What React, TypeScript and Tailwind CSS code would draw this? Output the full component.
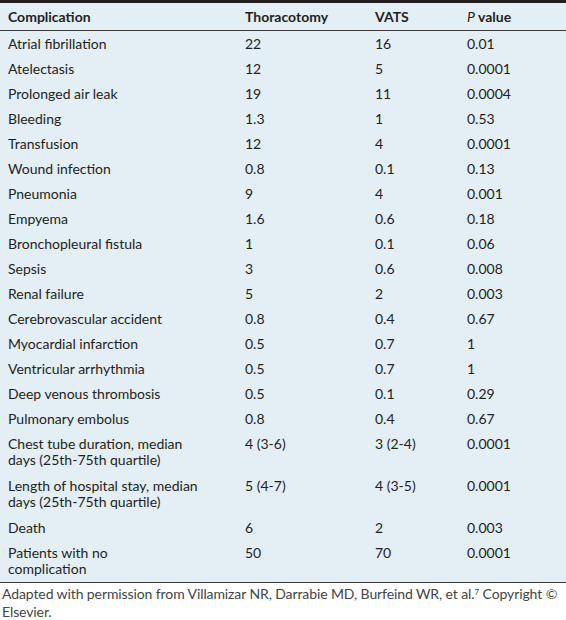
const rows: { name: string[]; t: string; v: string; p: string }[] = [
  { name: ["Atrial fibrillation"], t: "22", v: "16", p: "0.01" },
  { name: ["Atelectasis"], t: "12", v: "5", p: "0.0001" },
  { name: ["Prolonged air leak"], t: "19", v: "11", p: "0.0004" },
  { name: ["Bleeding"], t: "1.3", v: "1", p: "0.53" },
  { name: ["Transfusion"], t: "12", v: "4", p: "0.0001" },
  { name: ["Wound infection"], t: "0.8", v: "0.1", p: "0.13" },
  { name: ["Pneumonia"], t: "9", v: "4", p: "0.001" },
  { name: ["Empyema"], t: "1.6", v: "0.6", p: "0.18" },
  { name: ["Bronchopleural fistula"], t: "1", v: "0.1", p: "0.06" },
  { name: ["Sepsis"], t: "3", v: "0.6", p: "0.008" },
  { name: ["Renal failure"], t: "5", v: "2", p: "0.003" },
  { name: ["Cerebrovascular accident"], t: "0.8", v: "0.4", p: "0.67" },
  { name: ["Myocardial infarction"], t: "0.5", v: "0.7", p: "1" },
  { name: ["Ventricular arrhythmia"], t: "0.5", v: "0.7", p: "1" },
  { name: ["Deep venous thrombosis"], t: "0.5", v: "0.1", p: "0.29" },
  { name: ["Pulmonary embolus"], t: "0.8", v: "0.4", p: "0.67" },
  { name: ["Chest tube duration, median", "days (25th-75th quartile)"], t: "4 (3-6)", v: "3 (2-4)", p: "0.0001" },
  { name: ["Length of hospital stay, median", "days (25th-75th quartile)"], t: "5 (4-7)", v: "4 (3-5)", p: "0.0001" },
  { name: ["Death"], t: "6", v: "2", p: "0.003" },
  { name: ["Patients with no", "complication"], t: "50", v: "70", p: "0.0001" },
];

export default function App() {
  return (
    <div className="w-[566px] h-[620px] bg-white text-[#231f20] font-['Lato','Open_Sans',sans-serif] text-[14px]">
      <div className="bg-[#e3eef5] border-t-[3px] border-[#231f20] border-b border-b-[#3a3a3a]">
        {/* header */}
        <div className="grid grid-cols-[237px_130px_92px_1fr] h-[28px] items-center pl-[8px] border-b border-[#3a3a3a] font-bold">
          <div>Complication</div>
          <div>Thoracotomy</div>
          <div>VATS</div>
          <div>
            <span className="italic font-normal">P</span> value
          </div>
        </div>
        {rows.map((r) => (
          <div
            key={r.name[0]}
            className={
              r.name.length > 1
                ? "grid grid-cols-[237px_130px_92px_1fr] pl-[8px] pt-[5px] pb-[5px] leading-[16px]"
                : "grid grid-cols-[237px_130px_92px_1fr] pl-[8px] pt-[5px] pb-[4px] leading-[16px]"
            }
          >
            <div>
              {r.name.map((n) => (
                <div key={n}>{n}</div>
              ))}
            </div>
            <div>{r.t}</div>
            <div>{r.v}</div>
            <div>{r.p}</div>
          </div>
        ))}
      </div>
      <div className="pl-[2px] pt-[2px] leading-[18px] text-[14px] tracking-[-0.1px] text-[#444]">
        Adapted with permission from Villamizar NR, Darrabie MD, Burfeind WR, et al.
        <sup className="text-[8px]">7</sup> Copyright © Elsevier.
      </div>
    </div>
  );
}
